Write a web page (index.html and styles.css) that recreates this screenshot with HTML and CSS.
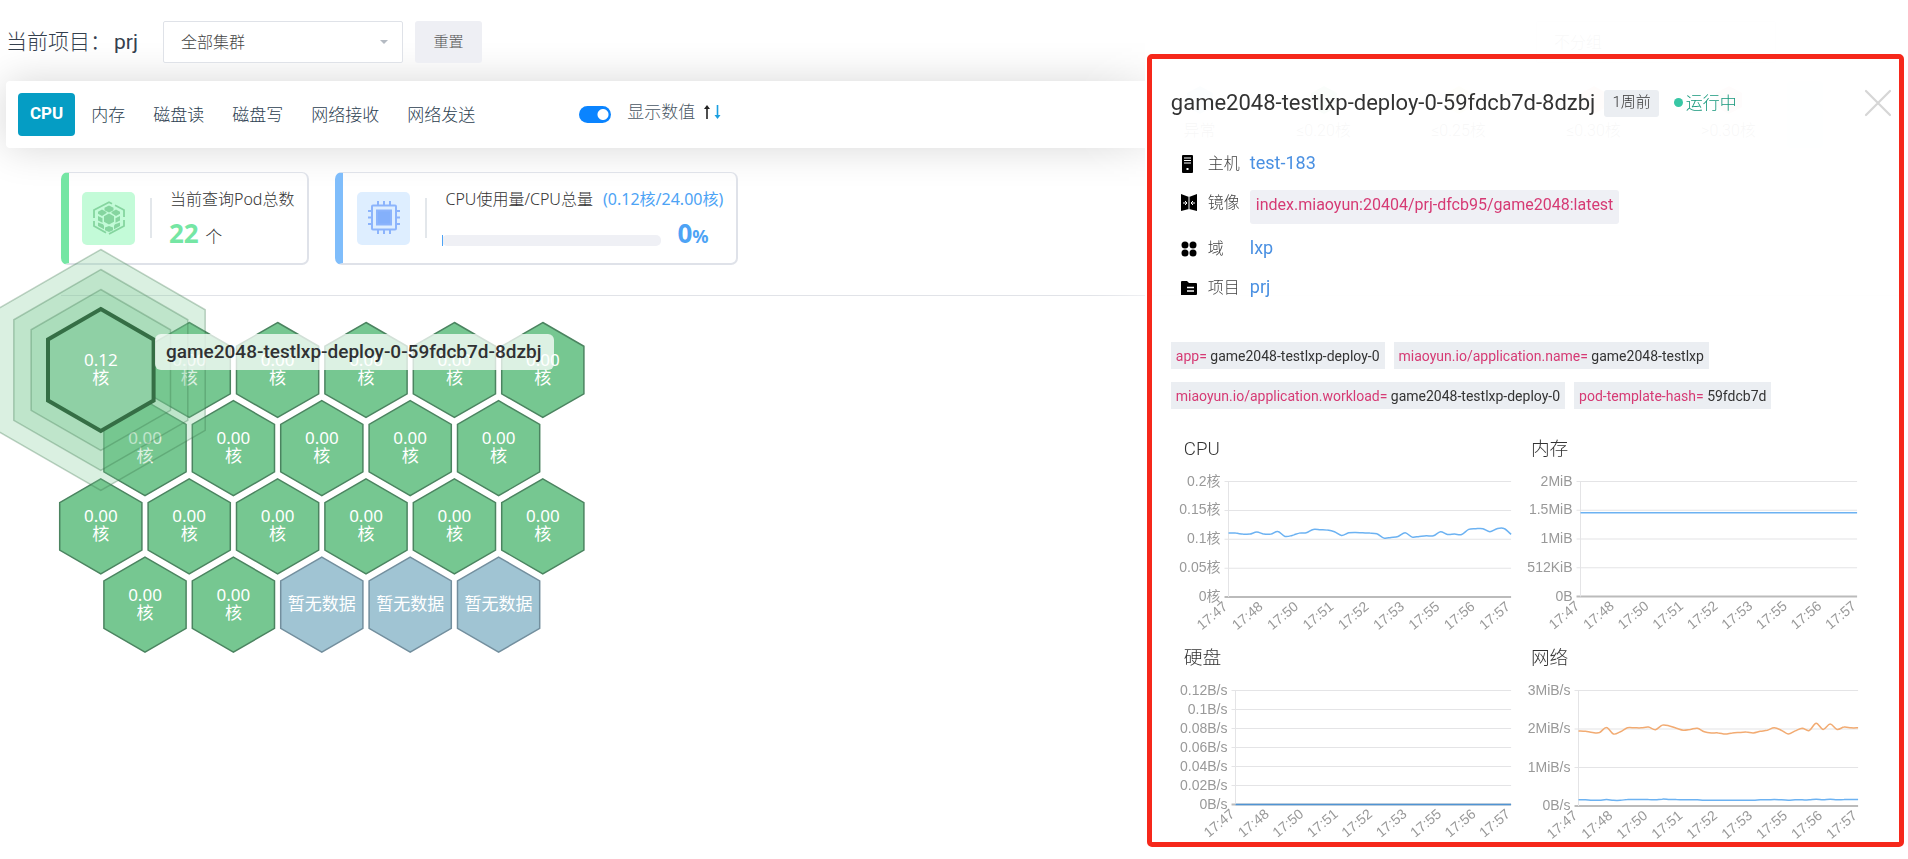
FILE: index.html
```html
<!DOCTYPE html>
<html lang="zh-CN">
<head>
<meta charset="utf-8">
<title>Pod 监控</title>
<link rel="stylesheet" href="styles.css">
</head>
<body>
<main class="page">
  <header class="filters">
    <h1 class="project">当前项目：<span class="project-name">prj</span></h1>
    <div class="select-box cluster-box">
      <select class="select" aria-label="集群"><option>全部集群</option></select>
      <svg class="caret" viewBox="0 0 8 4" aria-hidden="true"><path d="M0 0h8L4 4z"/></svg>
    </div>
    <button class="reset" type="button">重置</button>
    <div class="select-box group-box">
      <select class="select" aria-label="分组"><option>不分组</option></select>
    </div>
  </header>

  <section class="toolbar">
    <nav class="tabs">
      <button class="tab tab-active" type="button">CPU</button>
      <button class="tab" type="button">内存</button>
      <button class="tab" type="button">磁盘读</button>
      <button class="tab" type="button">磁盘写</button>
      <button class="tab" type="button">网络接收</button>
      <button class="tab" type="button">网络发送</button>
    </nav>
    <div class="display">
      <input class="switch" type="checkbox" id="show-values" checked>
      <label for="show-values">显示数值</label>
      <button class="sort" type="button" aria-label="排序">
        <svg width="18" height="16" viewBox="0 0 18 16">
          <path d="M4 15V3" stroke="#222" stroke-width="1.6"/><path d="M1 5l3-4 3 4z" fill="#222"/>
          <path d="M14.500 1v12" stroke="#1a9fe0" stroke-width="1.6"/><path d="M11.500 11l3 4 3-4z" fill="#1a9fe0"/>
        </svg>
      </button>
    </div>
    <ul class="legend">
      <li><svg width="26" height="28" viewBox="0 0 26 28"><path d="M13 0l13 7v14l-13 7-13-7V7z" fill="#9fc4d4"/></svg>异常</li>
      <li><svg width="26" height="28" viewBox="0 0 26 28"><path d="M13 0l13 7v14l-13 7-13-7V7z" fill="#76c791"/></svg>≤0.20核</li>
      <li><svg width="26" height="28" viewBox="0 0 26 28"><path d="M13 0l13 7v14l-13 7-13-7V7z" fill="#e3d98c"/></svg>≤0.25核</li>
      <li><svg width="26" height="28" viewBox="0 0 26 28"><path d="M13 0l13 7v14l-13 7-13-7V7z" fill="#f0b5a0"/></svg>≤0.30核</li>
      <li><svg width="26" height="28" viewBox="0 0 26 28"><path d="M13 0l13 7v14l-13 7-13-7V7z" fill="#e6a3a3"/></svg>&gt;0.30核</li>
    </ul>
    <button class="play" type="button" aria-label="播放"></button>
  </section>

  <section class="stats">
    <article class="stat stat-green">
      <span class="stat-icon">
        <svg width="34" height="34" viewBox="0 0 34 34" fill="none" stroke="#85d59f" stroke-width="1.800">
          <path d="M20 2.800L17 1.200 2 9v8M2 20v5l12 6.700M17 33l15-8v-6M32 16V9l-9-4.700"/>
          <g fill="#85d59f" stroke="none">
            <path d="M17 4.500l4.500 2.300v2.400L17 11.500l-4.500-2.300V6.800z"/>
            <path d="M10 8.500l4.500 2.500v1L10 15l-4-2.200v-2z"/>
            <path d="M24 8.500l-4.500 2.500v1L24 15l4-2.200v-2z"/>
            <path d="M17 12.500l5 2.800v5.400l-5 2.800-5-2.800v-5.400z"/>
            <path d="M6 15l4.500 2.300v4.400L6 19.600z"/>
            <path d="M28 15l-4.500 2.300v4.400l4.500-2.100z"/>
            <path d="M6 21.500l5 1.800 1 1.500v3.400L6 25z"/>
            <path d="M28 21.500l-5 1.800-1 1.500v3.400l6-3.200z"/>
            <path d="M17 25l4 1.500v2.700L17 31l-4-1.800v-2.700z"/>
          </g>
        </svg>
      </span>
      <span class="stat-rule"></span>
      <div class="stat-body">
        <p class="stat-title">当前查询Pod总数</p>
        <p class="stat-value"><strong>22</strong> 个</p>
      </div>
    </article>
    <article class="stat stat-blue">
      <span class="stat-icon">
        <svg width="34" height="34" viewBox="0 0 34 34" fill="none" stroke="#8cb4fc" stroke-width="2">
          <path d="M11 0v4M17 0v4M23 0v4M11 29v4M17 29v4M23 29v4M1 10h4M1 16.500h4M1 23h4M29 10h4M29 16.500h4M29 23h4"/>
          <rect x="5" y="4.500" width="24" height="24" rx="1"/>
          <rect x="10" y="9.500" width="14" height="14" fill="#84b0fb"/>
        </svg>
      </span>
      <span class="stat-rule"></span>
      <div class="stat-body">
        <p class="stat-title">CPU使用量/CPU总量 <span class="usage">(0.12核/24.00核)</span></p>
        <div class="usage-row">
          <div class="bar"><span class="bar-fill"></span></div>
          <p class="percent"><strong>0</strong>%</p>
        </div>
      </div>
    </article>
  </section>

  <section class="pods">
    <svg class="hexmap" id="hexmap" width="640" height="380" viewBox="0 296 640 380" role="img" aria-label="Pod 分布"></svg>
    <div class="tip">game2048-testlxp-deploy-0-59fdcb7d-8dzbj</div>
  </section>
</main>

<aside class="drawer">
  <header class="drawer-head">
    <h2 class="pod-name">game2048-testlxp-deploy-0-59fdcb7d-8dzbj</h2>
    <span class="age">1周前</span>
    <span class="status">运行中</span>
    <button class="close" type="button" aria-label="关闭">
      <svg width="28" height="28" viewBox="0 0 28 28"><path d="M2 2l24 24M26 2L2 26" stroke="#d6d6d6" stroke-width="2.200" stroke-linecap="round"/></svg>
    </button>
  </header>
  <dl class="facts">
    <div class="fact">
      <dt><svg width="18" height="18" viewBox="0 0 18 18"><rect x="2" y="0" width="11" height="18" rx="1"/><path d="M4 3h7M4 5.500h7M4 8h7" stroke="#fff"/><rect x="6.500" y="13" width="2" height="2" fill="#fff"/></svg>主机</dt>
      <dd><a href="#host">test-183</a></dd>
    </div>
    <div class="fact fact-image">
      <dt><svg width="18" height="18" viewBox="0 0 18 18"><path d="M1 0l8 3 8-3v17l-8-2-8 2z"/><path d="M9 3v12" stroke="#fff"/><path d="M3 9h4M5 7l2 2-2 2M15 9h-4M13 7l-2 2 2 2" stroke="#fff" fill="none"/></svg>镜像</dt>
      <dd><code class="image">index.miaoyun:20404/prj-dfcb95/game2048:latest</code></dd>
    </div>
    <div class="fact">
      <dt><svg width="18" height="18" viewBox="0 0 18 18"><circle cx="5" cy="5" r="3.500"/><circle cx="13" cy="5" r="3.500"/><circle cx="5" cy="13" r="3.500"/><circle cx="13" cy="13" r="3.500"/></svg>域</dt>
      <dd><a href="#domain">lxp</a></dd>
    </div>
    <div class="fact">
      <dt><svg width="18" height="18" viewBox="0 0 18 18"><path d="M1 3q0-1 1-1h5l2 2h7q1 0 1 1v10q0 1-1 1H1z"/><path d="M7 8.500h7M7 12h7" stroke="#fff" stroke-width="1.500"/></svg>项目</dt>
      <dd><a href="#project">prj</a></dd>
    </div>
  </dl>
  <ul class="tags">
    <li><b>app=</b> game2048-testlxp-deploy-0</li>
    <li><b>miaoyun.io/application.name=</b> game2048-testlxp</li>
    <li><b>miaoyun.io/application.workload=</b> game2048-testlxp-deploy-0</li>
    <li><b>pod-template-hash=</b> 59fdcb7d</li>
  </ul>
  <div class="charts">
    <section class="chart"><h3>CPU</h3><svg id="chart-cpu" viewBox="0 0 347 183"></svg></section>
    <section class="chart"><h3>内存</h3><svg id="chart-mem" viewBox="0 0 347 183"></svg></section>
    <section class="chart"><h3>硬盘</h3><svg id="chart-disk" viewBox="0 0 347 183"></svg></section>
    <section class="chart"><h3>网络</h3><svg id="chart-net" viewBox="0 0 347 183"></svg></section>
  </div>
  <div class="frame"></div>
</aside>
<script src="app.js"></script>
</body>
</html>
```

FILE: styles.css
```css
* { box-sizing: border-box; }

body {
  margin: 0;
  min-height: 100vh;
  overflow: hidden;
  background: #fff;
  color: #333;
  font-family: Roboto, "Noto Sans CJK SC", sans-serif;
  font-size: 16px;
  font-weight: 300;
}

h1, h2, h3, p, ul, dl, dd { margin: 0; padding: 0; font-weight: inherit; }
ul { list-style: none; }
button, select { font: inherit; color: inherit; border: 0; background: none; padding: 0; }
a { color: #4a90e2; text-decoration: none; }

/* filters */
.filters {
  display: flex;
  align-items: center;
  padding: 21px 5px 18px 6px;
}
.project { font-size: 21px; line-height: 41px; color: #34404e; }
.project-name { margin-left: 3px; font-weight: 400; }
.select-box { position: relative; width: 240px; height: 42px; }
.cluster-box { margin: 0 12px 0 25px; }
.group-box { margin-left: auto; margin-right: 127px; }
.select {
  width: 100%;
  height: 100%;
  padding-left: 17px;
  border: 1px solid #dfe2e8;
  border-radius: 2px;
  background: #fff;
  color: #444;
  appearance: none;
}
.caret { position: absolute; right: 15px; top: 19px; width: 8px; height: 4px; fill: #b4bac2; }
.reset {
  width: 67px;
  height: 42px;
  padding-bottom: 3px;
  border-radius: 3px;
  background: #eeeff4;
  color: #555;
  font-size: 15px;
}

/* toolbar */
.toolbar {
  display: flex;
  align-items: center;
  height: 67px;
  margin: 0 5px 0 6px;
  border-radius: 4px;
  background: #fff;
  box-shadow: 0 0 40px rgba(0, 0, 0, .16);
}
.tabs { display: flex; gap: 4px; padding-left: 12px; }
.tab { height: 43px; padding: 0 12px 3px; font-size: 17px; color: #2c3e50; }
.tab-active { border-radius: 4px; background: #059dc4; color: #fff; font-weight: 700; }
.display {
  display: flex;
  align-items: center;
  margin-left: 92px;
  font-size: 17px;
  color: #4a5764;
}
.display label { line-height: 24px; padding-bottom: 6px; }
.switch {
  appearance: none;
  width: 32px;
  height: 17px;
  margin: 0 16px 0 0;
  border-radius: 9px;
  background: radial-gradient(circle at 24px 50%, #fff 5px, #0a84ff 6px);
}
.sort { margin: 0 0 6px 8px; height: 16px; }
.sort svg { display: block; }
.legend { display: flex; margin: 0 -9px 0 auto; }
.legend li { width: 135px; text-align: center; line-height: 26px; }
.legend li:first-child { width: 113px; }
.legend svg { display: block; margin: 0 auto 4px; }
.play { width: 36px; height: 67px; margin-right: 80px; border-radius: 4px; background: #d8eef8; }

/* statistics */
.stats {
  display: flex;
  gap: 26px;
  margin-left: 61px;
  padding: 24px 0 30px;
  border-bottom: 1px solid #e1e3e8;
}
.stat {
  display: flex;
  align-items: center;
  height: 93px;
  border: 2px solid #dfe2e9;
  border-width: 1px 2px 2px 8px;
  border-radius: 7px;
  font-family: "Noto Sans", "Noto Sans CJK SC", sans-serif;
}
.stat-green { border-left-color: #75e6a4; padding: 0 13px 0 13px; }
.stat-blue { border-left-color: #7fbdfb; padding: 0 13px 0 14px; }
.stat-icon {
  display: grid;
  place-items: center;
  width: 53px;
  height: 53px;
  border-radius: 5px;
}
.stat-green .stat-icon { background: #c3fbd8; }
.stat-blue .stat-icon { background: #deeeff; }
.stat-rule { width: 2px; height: 40px; margin: 0 17px 0 15px; background: #e3e7eb; }
.stat-blue .stat-rule { margin-right: 15px; }
.stat-body { display: flex; flex-direction: column; gap: 5px; padding-top: 4px; }
.stat-title { line-height: 24px; padding-left: 1px; }
.stat-blue .stat-title { padding-left: 3px; }
.stat-title .usage { margin-left: 6px; color: #4da3f5; font-weight: 400; }
.stat-value { line-height: 34px; font-size: 17px; }
.stat-value strong { margin-right: 2px; font-size: 26px; font-weight: 700; color: #75e6a4; }
.usage-row { display: flex; align-items: center; gap: 16px; }
.bar { width: 219px; height: 11px; margin-top: 12px; border-radius: 5px; background: #eff0f5; }
.bar-fill { display: block; width: 1px; height: 11px; background: #4da3f5; }
.percent { font-size: 18px; font-weight: 700; line-height: 34px; color: #4da3f5; }
.percent strong { font-size: 26px; font-weight: 700; }

/* hexagon map */
.pods { position: relative; }
.hexmap { display: block; overflow: visible; }
.hex { fill: #76c791; stroke: #4b8460; stroke-width: 1.500; }
.hex-empty { fill: #a0c4d3; stroke: #738f9e; }
.ring { fill: #76c791; fill-opacity: .27; stroke: #356e45; stroke-opacity: .3; stroke-width: 1.500; }
.hex-active { fill: #8fd0a5; stroke: #356e45; stroke-width: 4; }
.hex-label {
  fill: #fff;
  font: 400 17px "Noto Sans", "Noto Sans CJK SC", sans-serif;
  text-anchor: middle;
}
.tip {
  position: absolute;
  left: 155px;
  top: 38px;
  padding: 0 13px 0 11px;
  border-radius: 6px;
  background: rgba(255, 255, 255, .75);
  color: #303133;
  font-size: 19px;
  font-weight: 500;
  line-height: 36px;
}

/* drawer */
.drawer {
  position: fixed;
  top: 0;
  right: 0;
  bottom: 0;
  width: 40%;
  padding: 86px 43px 0 26px;
  background: rgba(255, 255, 255, .96);
  box-shadow: 0 0 70px #fff;
}
.frame {
  position: absolute;
  inset: 54px 4px 12px 2px;
  border: 5px solid #f6281b;
  border-radius: 5px;
  pointer-events: none;
}
.drawer-head { display: flex; align-items: center; height: 34px; margin-right: -27px; }
.pod-name { font-size: 22px; font-weight: 400; line-height: 34px; }
.age {
  margin-left: 9px;
  padding: 0 8px 2px;
  border-radius: 3px;
  background: #ebeef2;
  font-size: 15px;
  line-height: 25px;
}
.status {
  display: flex;
  align-items: center;
  margin-left: 15px;
  padding-bottom: 3px;
  font-size: 17px;
  color: #17987c;
}
.status::before {
  content: "";
  width: 9px;
  height: 9px;
  margin: 1px 3px 0 0;
  border-radius: 50%;
  background: #38c7a5;
}
.close { margin-left: auto; height: 28px; }
.close svg { display: block; }
.facts { display: grid; gap: 15px; margin: 31px 0 0 9px; }
.fact { display: flex; height: 24px; line-height: 24px; }
.fact-image { height: 31px; }
.fact dt { display: flex; align-items: center; gap: 10px; width: 70px; height: 26px; color: #444; }
.fact dd { font-size: 18px; }
.fact a { font-weight: 400; }
.image {
  display: block;
  height: 34px;
  padding: 0 6px;
  border-radius: 3px;
  background: #eff0f5;
  color: #d63a74;
  font: 400 16px/30px Roboto, sans-serif;
}
.tags { display: flex; flex-wrap: wrap; gap: 13px 9px; margin-top: 43px; font-size: 14px; font-weight: 400; }
.tags li { padding: 2px 5px 0; line-height: 25px; background: #ebeef2; }
.tags b { font-weight: 400; color: #d63a74; }

.charts { display: grid; grid-template-columns: 1fr 1fr; row-gap: 1px; margin-top: 28px; }
.chart h3 { padding-left: 13px; line-height: 25px; }
.chart svg { display: block; width: 100%; overflow: visible; }
.tick { fill: #999; font: 400 14px "Liberation Sans", "Noto Sans CJK SC", sans-serif; text-anchor: end; }
.grid-line { stroke: #e4e4e6; }
.base-line { stroke: #bbb; stroke-width: 2; }
.series { fill: none; stroke-width: 1.500; }
```

FILE: app.js
```js
const NS = "http://www.w3.org/2000/svg";

function add(parent, name, attrs, text) {
  const el = document.createElementNS(NS, name);
  for (const key in attrs) el.setAttribute(key, attrs[key]);
  if (text !== undefined) el.textContent = text;
  parent.appendChild(el);
  return el;
}

/* hexagon map */
function hexPoints(cx, cy, r) {
  const w = r * 0.866;
  return [[0, -r], [w, -r / 2], [w, r / 2], [0, r], [-w, r / 2], [-w, -r / 2]]
    .map(([x, y]) => `${(cx + x).toFixed(1)},${(cy + y).toFixed(1)}`).join(" ");
}

const map = document.getElementById("hexmap");
const START_X = 100.8, START_Y = 370, STEP_X = 88.4, STEP_Y = 78.2;
const rows = [6, 5, 6, 5];

function label(cx, cy, lines) {
  const first = lines.length === 1 ? cy + 5 : cy - 4;
  lines.forEach((line, i) => add(map, "text", { class: "hex-label", x: cx, y: first + i * 18 }, line));
}

rows.forEach((count, r) => {
  for (let c = 0; c < count; c++) {
    if (r === 0 && c === 0) continue;
    const cx = START_X + c * STEP_X + (r % 2) * STEP_X / 2;
    const cy = START_Y + r * STEP_Y;
    const empty = r === 3 && c > 1;
    add(map, "polygon", { class: empty ? "hex hex-empty" : "hex", points: hexPoints(cx, cy, 47.5) });
    label(cx, cy, empty ? ["暂无数据"] : ["0.00", "核"]);
  }
});
[120.5, 100.5, 80.5].forEach(r =>
  add(map, "polygon", { class: "ring", points: hexPoints(START_X, START_Y, r) }));
add(map, "polygon", { class: "hex-active", points: hexPoints(START_X, START_Y, 61) });
label(START_X, START_Y, ["0.12", "核"]);

/* line charts */
const TIMES = ["17:47", "17:48", "17:50", "17:51", "17:52", "17:53", "17:55", "17:56", "17:57"];

function smooth(points) {
  let d = `M${points[0]}`;
  for (let i = 0; i < points.length - 1; i++) {
    const p0 = points[i - 1] || points[i], p1 = points[i], p2 = points[i + 1], p3 = points[i + 2] || p2;
    const a = [p1[0] + (p2[0] - p0[0]) / 6, p1[1] + (p2[1] - p0[1]) / 6];
    const b = [p2[0] - (p3[0] - p1[0]) / 6, p2[1] - (p3[1] - p1[1]) / 6];
    d += `C${[...a, ...b, ...p2].map(n => n.toFixed(1)).join(" ")}`;
  }
  return d;
}

function draw(id, { left, right, bottom, ticks, max, series }) {
  const svg = document.getElementById(id);
  const top = 19.5;
  ticks.forEach((name, i) => {
    const y = bottom - (bottom - top) * i / (ticks.length - 1);
    add(svg, "line", { class: i ? "grid-line" : "base-line", x1: left - 4, x2: right, y1: y, y2: y });
    add(svg, "text", { class: "tick", x: left - 8, y: y + 4 }, name);
  });
  add(svg, "line", { class: "grid-line", x1: left, x2: left, y1: top, y2: bottom });
  TIMES.forEach((name, i) => {
    const x = left + (right - left) * i / (TIMES.length - 1);
    add(svg, "text", { class: "tick", transform: `translate(${x} ${bottom + 11}) rotate(-40)` }, name);
  });
  series.forEach(({ color, data }) => {
    const pts = data.map((v, i) => [
      left + (right - left) * i / (data.length - 1),
      bottom - (bottom - top) * v / max
    ]);
    add(svg, "path", { class: "series", stroke: color, d: smooth(pts) });
  });
}

draw("chart-cpu", {
  left: 57.5, right: 340, bottom: 135, max: 0.2,
  ticks: ["0核", "0.05核", "0.1核", "0.15核", "0.2核"],
  series: [{ color: "#6cb2f2", data: [
    .1107, .1107, .109, .109, .1124, .109, .109, .1135, .1049, .1066, .1107, .1112, .117, .1164,
    .1159, .113, .1066, .1112, .1118, .1112, .1107, .1095, .102, .1032, .1049, .1112, .1037, .1049,
    .106, .106, .113, .1084, .109, .1084, .117, .1182, .1182, .113, .1182, .1187, .1084] }]
});
draw("chart-mem", {
  left: 62.5, right: 339, bottom: 134.5, max: 2,
  ticks: ["0B", "512KiB", "1MiB", "1.5MiB", "2MiB"],
  series: [{ color: "#6cb2f2", data: [1.455, 1.455] }]
});
draw("chart-disk", {
  left: 64.5, right: 340, bottom: 133.5, max: 0.12,
  ticks: ["0B/s", "0.02B/s", "0.04B/s", "0.06B/s", "0.08B/s", "0.1B/s", "0.12B/s"],
  series: [{ color: "#4f94d4", data: [0, 0] }]
});
draw("chart-net", {
  left: 60.5, right: 340, bottom: 135, max: 3,
  ticks: ["0B/s", "1MiB/s", "2MiB/s", "3MiB/s"],
  series: [
    { color: "#f2ab72", data: [
      1.95, 1.94, 1.91, 1.91, 2.04, 1.87, 1.93, 2.03, 2.03, 2.03, 2.05, 1.98, 2.1, 2.08, 2.02, 1.97,
      1.99, 2.02, 1.93, 1.9, 1.9, 1.87, 1.9, 1.91, 1.92, 1.9, 1.94, 1.97, 2.03, 1.97, 1.87, 1.95,
      2.02, 1.96, 2.15, 1.99, 2.13, 1.99, 2.05, 2.03, 2.03] },
    { color: "#6cb2f2", data: [
      .16, .16, .15, .15, .17, .15, .15, .17, .17, .17, .17, .16, .18, .17, .17, .16, .16, .16, .15,
      .15, .15, .15, .15, .15, .15, .15, .16, .16, .17, .16, .15, .16, .16, .16, .18, .16, .18, .16,
      .17, .17, .17] }
  ]
});
```
